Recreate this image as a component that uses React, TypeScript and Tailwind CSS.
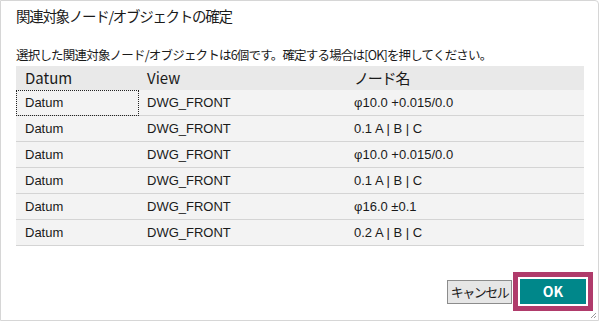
import React from "react";

const rows = [
  ["Datum", "DWG_FRONT", "φ10.0 +0.015/0.0"],
  ["Datum", "DWG_FRONT", "0.1 A | B | C"],
  ["Datum", "DWG_FRONT", "φ10.0 +0.015/0.0"],
  ["Datum", "DWG_FRONT", "0.1 A | B | C"],
  ["Datum", "DWG_FRONT", "φ16.0 ±0.1"],
  ["Datum", "DWG_FRONT", "0.2 A | B | C"],
];

export default function App() {
  const jp = { fontFamily: '"Segoe UI", "Noto Sans CJK JP", "Noto Sans", sans-serif' };
  return (
    <div className="w-[600px] h-[321px] bg-white overflow-hidden">
      <div className="relative w-[599px] h-[321px] bg-white border border-[#d6d6d6] rounded-tr-[4px] flex flex-col">
        <div className="pl-[15px] pt-[3px] h-[40px] text-[14.5px] tracking-[-1.3px] text-[#1a1a1a] leading-[24px] whitespace-nowrap" style={jp}>
          関連対象ノード/オブジェクトの確定
        </div>
        <div className="pl-[15px] h-[25px] text-[12.5px] tracking-[-0.8px] text-[#1a1a1a] leading-[25px] pt-[1px] whitespace-nowrap" style={jp}>
          選択した関連対象ノード/オブジェクトは6個です。確定する場合は[OK]を押してください。
        </div>
        <div className="ml-[15px] w-[568px]">
          <div className="flex h-[24px] bg-[#e9e9e9] text-[15px] text-[#1a1a1a] leading-[24px]" style={jp}>
            <div className="w-[131px] pl-[9px]">Datum</div>
            <div className="w-[207px]">View</div>
            <div className="tracking-[-1.2px]">ノード名</div>
          </div>
          {rows.map((r, i) => (
            <div
              key={i}
              className="flex h-[26px] bg-[#f3f3f3] border-b border-[#d4d4d4] text-[13px] text-[#1a1a1a] leading-[25px]"
              style={{ fontFamily: '"Liberation Sans", Arial, sans-serif' }}
            >
              <div
                className={
                  i === 0
                    ? "w-[123px] mr-[8px] pl-[8px] border border-dotted border-[#222] leading-[23px] -mb-px"
                    : "w-[131px] pl-[9px]"
                }
              >
                {r[0]}
              </div>
              <div className="w-[207px]">{r[1]}</div>
              <div>{r[2]}</div>
            </div>
          ))}
        </div>
        <div className="flex-1" />
        <div className="flex justify-end items-center pr-[5px] pb-[9px] gap-[1px]">
          <button
            className="w-[65px] h-[24px] bg-[#e6e6e6] border border-[#8c8c8c] text-[13px] tracking-[-1.5px] text-[#1a1a1a] leading-[22px] whitespace-nowrap"
            style={jp}
          >
            キャンセル
          </button>
          <div className="border-[5px] border-[#b03b6b] p-[2px]">
            <button
              className="w-[66px] h-[25px] bg-[#00878a] text-white text-[14px] font-semibold leading-[25px]"
              style={jp}
            >
              OK
            </button>
          </div>
        </div>
        <svg className="absolute right-[1px] bottom-[1px]" width="8" height="8" viewBox="0 0 8 8">
          <line x1="7" y1="2" x2="2" y2="7" stroke="#9a9a9a" strokeWidth="1" />
          <line x1="7" y1="5" x2="5" y2="7" stroke="#9a9a9a" strokeWidth="1" />
        </svg>
      </div>
    </div>
  );
}
